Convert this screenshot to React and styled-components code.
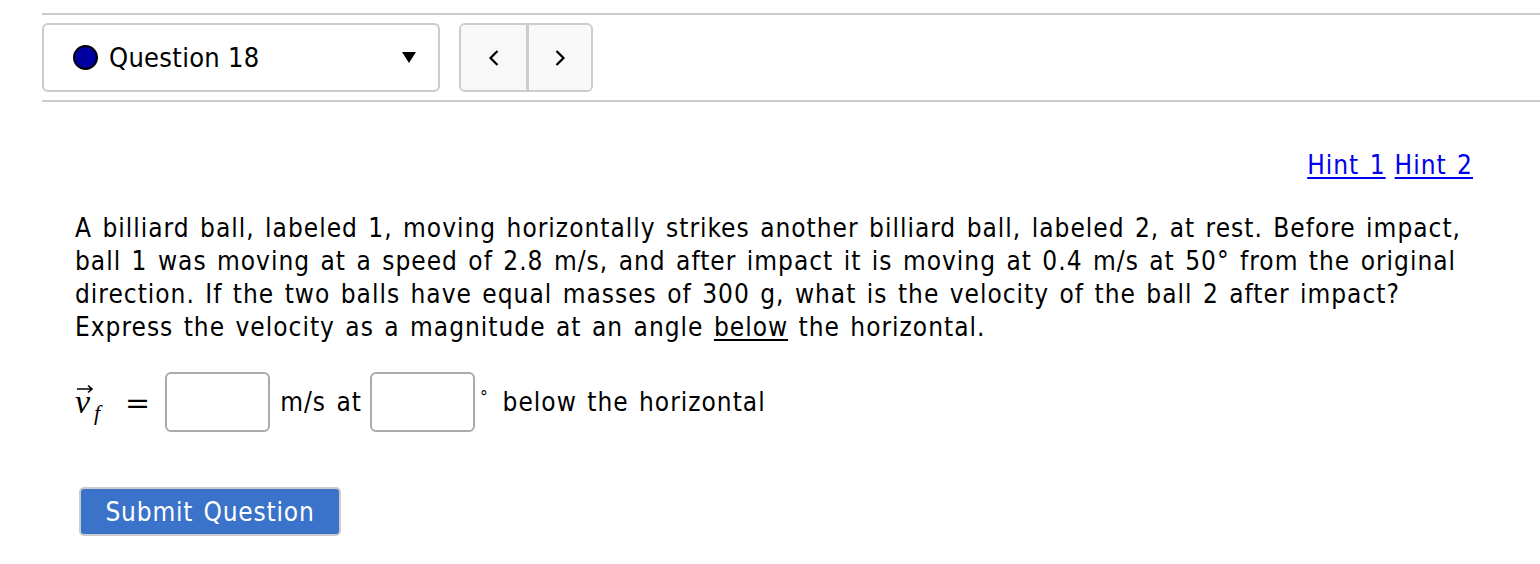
import React from "react";
import styled, { createGlobalStyle } from "styled-components";

const GlobalStyle = createGlobalStyle`
  body {
    margin: 0;
    background: #fff;
    font-family: "DejaVu Sans Condensed", "DejaVu Sans", sans-serif;
    color: #000;
  }
`;

const Page = styled.div`
  padding: 13px 0 0 42px;
`;

const TopBar = styled.div`
  display: flex;
  align-items: center;
  gap: 19px;
  padding: 8px 0;
  border-top: 2px solid #cccccc;
  border-bottom: 2px solid #cccccc;
`;

const Select = styled.div`
  box-sizing: border-box;
  width: 398px;
  height: 69px;
  display: flex;
  align-items: center;
  padding: 0 20px 0 29px;
  border: 2px solid #cccccc;
  border-radius: 6px;
  font-size: 27px;
  letter-spacing: 0.3px;
`;

const Dot = styled.span`
  width: 21px;
  height: 21px;
  border-radius: 50%;
  background: #0000a0;
  border: 2px solid #000;
  margin-right: 11px;
`;

const SelectLabel = styled.span`
  flex: 1;
`;

const Caret = styled.span`
  width: 0;
  height: 0;
  border-left: 7px solid transparent;
  border-right: 7px solid transparent;
  border-top: 11px solid #000;
  margin-right: 2px;
`;

const NavGroup = styled.div`
  display: flex;
  height: 69px;
  box-sizing: border-box;
  border: 2px solid #cccccc;
  border-radius: 6px;
  overflow: hidden;
`;

const NavButton = styled.button`
  width: 65px;
  border: none;
  background: #f8f8f8;
  display: flex;
  align-items: center;
  justify-content: center;
  padding: 0;
  & + & {
    border-left: 3px solid #cccccc;
  }
`;

const Content = styled.div`
  padding: 48px 67px 0 33px;
  font-size: 26px;
  letter-spacing: 1px;
  word-spacing: 2px;
`;

const Hints = styled.div`
  display: flex;
  justify-content: flex-end;
  gap: 9px;
`;

const HintLink = styled.a`
  color: #0000ee;
  text-decoration: underline;
  text-underline-offset: 3px;
`;

const Question = styled.p`
  margin: 32px -22px 0 0;
  line-height: 33px;
`;

const Underlined = styled.span`
  text-decoration: underline;
  text-underline-offset: 3px;
`;

const AnswerRow = styled.div`
  display: flex;
  align-items: center;
  margin-top: 28px;
`;

const MathVar = styled.span`
  position: relative;
  display: inline-flex;
  align-items: baseline;
  font-family: "Liberation Serif", "DejaVu Serif", serif;
  font-style: italic;
  font-size: 34px;
  letter-spacing: 0;
  width: 50px;
`;

const VecArrow = styled.svg`
  position: absolute;
  left: 1px;
  top: 1px;
`;

const Sub = styled.span`
  font-size: 22px;
  position: relative;
  top: 7px;
  margin-left: 4px;
`;

const Equals = styled.span`
  font-family: "DejaVu Serif", "Liberation Serif", serif;
  font-size: 30px;
  margin-right: 14px;
`;

const Field = styled.input`
  box-sizing: border-box;
  width: 105px;
  height: 60px;
  border: 2px solid #aaaaaa;
  border-radius: 6px;
  background: #fff;
`;

const Unit = styled.span`
  margin: 0 8px 0 10px;
`;

const Degree = styled.span`
  align-self: flex-start;
  margin: 15px 14px 0 5px;
  font-size: 17px;
`;

const SubmitButton = styled.button`
  margin: 55px 0 0 4px;
  box-sizing: border-box;
  width: 262px;
  height: 49px;
  background: #3a73c9;
  color: #fff;
  border: 2px solid #cccccc;
  border-radius: 5px;
  font-family: inherit;
  font-size: 26px;
  letter-spacing: 0.8px;
  word-spacing: 2px;
  padding: 0;
`;

const Chevron = ({ dir }) => (
  <svg width="14" height="22" viewBox="0 0 14 22">
    <path
      d={dir === "left" ? "M10.5 4 L3.5 11 L10.5 18" : "M3.5 4 L10.5 11 L3.5 18"}
      fill="none"
      stroke="#000"
      strokeWidth="2.2"
    />
  </svg>
);

export default function App() {
  return (
    <>
      <GlobalStyle />
      <Page>
        <TopBar>
          <Select>
            <Dot />
            <SelectLabel>Question 18</SelectLabel>
            <Caret />
          </Select>
          <NavGroup>
            <NavButton aria-label="previous">
              <Chevron dir="left" />
            </NavButton>
            <NavButton aria-label="next">
              <Chevron dir="right" />
            </NavButton>
          </NavGroup>
        </TopBar>
        <Content>
          <Hints>
            <HintLink href="#">Hint 1</HintLink>
            <HintLink href="#">Hint 2</HintLink>
          </Hints>
          <Question>
            A billiard ball, labeled 1, moving horizontally strikes another
            billiard ball, labeled 2, at rest. Before impact, ball 1 was moving
            at a speed of 2.8 m/s, and after impact it is moving at 0.4 m/s at
            50° from the original direction. If the two balls have equal masses
            of 300 g, what is the velocity of the ball 2 after impact? Express
            the velocity as a magnitude at an angle <Underlined>below</Underlined>{" "}
            the horizontal.
          </Question>
          <AnswerRow>
            <MathVar>
              <VecArrow width="18" height="10" viewBox="0 0 18 10">
                <path d="M1 5 H16 M12 1.5 L16 5 L12 8.5" fill="none" stroke="#000" strokeWidth="1.6" />
              </VecArrow>
              v<Sub>f</Sub>
            </MathVar>
            <Equals>=</Equals>
            <Field />
            <Unit>m/s at</Unit>
            <Field />
            <Degree>°</Degree>
            <span>below the horizontal</span>
          </AnswerRow>
          <SubmitButton>Submit Question</SubmitButton>
        </Content>
      </Page>
    </>
  );
}
